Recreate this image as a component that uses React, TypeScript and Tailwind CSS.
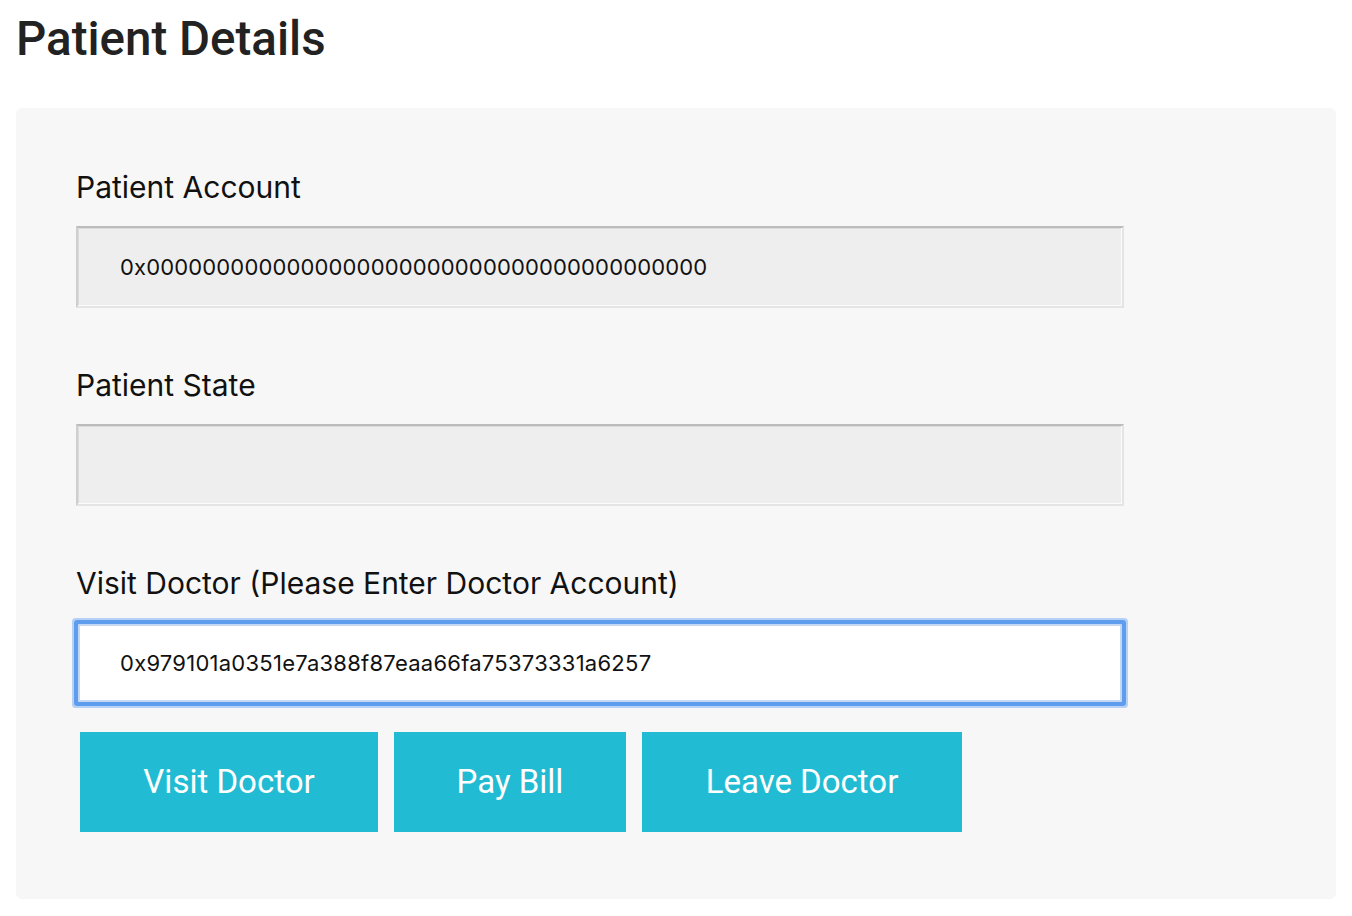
import React from "react";

const Label = ({ children }: { children: React.ReactNode }) => (
  <label className="block text-[30px] leading-[36px] text-[#111] font-['Inter',sans-serif]">
    {children}
  </label>
);

const ReadOnlyField = ({ value }: { value: string }) => (
  <div className="mt-[21px] h-[82px] w-[1048px] flex items-center pl-[42px] bg-[#eeeeee] border-2 border-t-[#bcbcbc] border-l-[#cfcfcf] border-r-[#e4e4e4] border-b-[#e4e4e4] shadow-[inset_-1px_-1px_0_#fbfbfb,inset_1px_1px_0_#dcdcdc] text-[22px] tracking-[0.15px] text-[#111] font-['Inter',sans-serif]">
    {value}
  </div>
);

const ActionButton = ({ children, w }: { children: React.ReactNode; w: string }) => (
  <button className={`${w} h-[100px] bg-[#21bcd3] text-white text-[33px] font-['Roboto',sans-serif] flex items-center justify-center`}>
    {children}
  </button>
);

const App = () => {
  return (
    <div className="min-h-screen bg-white px-4 font-['Roboto',sans-serif]">
      <h1 className="mt-[11px] text-[47.5px] leading-[56px] font-medium text-[#222]">Patient Details</h1>
      <div className="mt-[41px] rounded-md bg-[#f7f7f7] pl-[60px] pt-[61px] pb-[67px]">
        <Label>Patient Account</Label>
        <ReadOnlyField value="0x0000000000000000000000000000000000000000" />

        <div className="mt-[59px]">
          <Label>Patient State</Label>
          <ReadOnlyField value="" />
        </div>

        <div className="mt-[59px]">
          <Label>Visit Doctor (Please Enter Doctor Account)</Label>
          <input
            defaultValue="0x979101a0351e7a388f87eaa66fa75373331a6257"
            className="mt-[23px] ml-[2px] block h-[78px] w-[1044px] rounded-[1px] bg-white pl-[40px] border-2 border-[#c4d8f4] text-[22px] tracking-[0.25px] text-[#111] font-['Inter',sans-serif] outline-none shadow-[0_0_0_4px_#5e9cee,0_0_0_6px_#b7d1f6]"
          />
        </div>

        <div className="mt-[30px] ml-[4px] flex gap-4">
          <ActionButton w="w-[298px]">Visit Doctor</ActionButton>
          <ActionButton w="w-[232px]">Pay Bill</ActionButton>
          <ActionButton w="w-[320px]">Leave Doctor</ActionButton>
        </div>
      </div>
    </div>
  );
};

export default App;
